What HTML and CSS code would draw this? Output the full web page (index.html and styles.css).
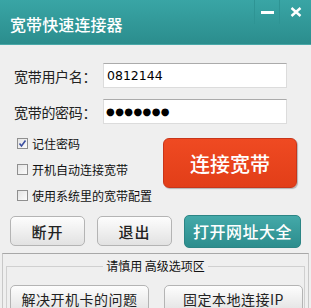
FILE: index.html
```html
<!DOCTYPE html>
<html lang="zh">
<head>
<meta charset="utf-8">
<link rel="stylesheet" href="styles.css">
</head>
<body>
<div class="window">
  <div class="titlebar">
    <div class="title">宽带快速连接器</div>
    <div class="controls">
      <div class="ctl ctl-min"><span class="dash"></span></div>
      <div class="ctl ctl-close">
        <svg width="12" height="10" viewBox="0 0 12 10"><path d="M1.5 1 L10.5 9 M10.5 1 L1.5 9" stroke="#fff" stroke-width="2.4" stroke-linecap="butt"/></svg>
      </div>
    </div>
  </div>

  <div class="form">
    <div class="field">
      <label class="lbl">宽带用户名：</label>
      <div class="input">0812144</div>
    </div>
    <div class="field">
      <label class="lbl">宽带的密码：</label>
      <div class="input pwd">●●●●●●●</div>
    </div>
  </div>

  <div class="middle">
    <div class="checks">
      <div class="check"><span class="box checked"><svg width="9" height="9" viewBox="0 0 9 9"><path d="M1.5 4.5 L3.5 7 L7.5 1.5" fill="none" stroke="#3b4fa0" stroke-width="1.6"/></svg></span>记住密码</div>
      <div class="check"><span class="box"></span>开机自动连接宽带</div>
      <div class="check"><span class="box"></span>使用系统里的宽带配置</div>
    </div>
    <div class="connect">连接宽带</div>
  </div>

  <div class="actions">
    <div class="btn gray">断开</div>
    <div class="btn gray">退出</div>
    <div class="btn teal">打开网址大全</div>
  </div>

  <div class="advanced">
    <div class="group">
      <div class="legend">请慎用 高级选项区</div>
      <div class="group-btns">
        <div class="btn gray wide">解决开机卡的问题</div>
        <div class="btn gray wide">固定本地连接IP</div>
      </div>
    </div>
  </div>
</div>
</body>
</html>
```

FILE: styles.css
```css
* { box-sizing: border-box; margin: 0; padding: 0; }
html, body { width: 311px; height: 308px; overflow: hidden; }
body {
  font-family: "Noto Sans CJK SC", "Liberation Sans", sans-serif;
  background: #efefef;
  color: #111;
}
.window {
  width: 311px;
  height: 308px;
  background: #efefef;
  overflow: hidden;
  display: flex;
  flex-direction: column;
}
.titlebar {
  height: 45px;
  flex: none;
  background: linear-gradient(#39a5a5, #2b8d8d);
  border-bottom: 1px solid #4aa8a8;
  display: flex;
  justify-content: space-between;
  align-items: flex-start;
}
.title {
  color: #fff;
  font-size: 16px;
  font-weight: 500;
  line-height: 1;
  padding: 16px 0 0 10px;
  letter-spacing: 0.1px;
}
.controls {
  display: flex;
  height: 24px;
}
.ctl {
  width: 26px;
  height: 24px;
  display: flex;
  align-items: center;
  justify-content: center;
}
.ctl-min { border-left: 1px solid #2e9494; border-right: 1px solid #2e9494; }
.ctl-close { width: 31px; }
.dash { width: 13px; height: 3px; background: #fff; display: block; }

.form {
  padding: 18px 0 0 14px;
  display: flex;
  flex-direction: column;
  gap: 11px;
}
.field { display: flex; align-items: center; height: 25px; }
.lbl {
  width: 89px;
  font-size: 14px;
  color: #222;
  letter-spacing: -0.3px;
}
.input {
  width: 184px;
  height: 25px;
  background: #fff;
  border: 1px solid #dcdcdc;
  border-top-color: #ababab;
  font-family: "DejaVu Sans", "Liberation Sans", sans-serif;
  font-size: 12.5px;
  line-height: 23px;
  padding-left: 3px;
  color: #000;
}
.pwd { font-size: 10px; letter-spacing: 0.4px; padding-left: 2px; }

.middle {
  display: flex;
  padding-top: 6px;
  height: 84px;
  flex: none;
}
.checks {
  display: flex;
  flex-direction: column;
  padding-left: 17px;
  width: 163px;
}
.check {
  height: 26px;
  display: flex;
  align-items: center;
  font-size: 12px;
  color: #111;
  gap: 4px;
  white-space: nowrap;
}
.box {
  width: 11px;
  height: 11px;
  border: 1px solid #8f8f8f;
  background: linear-gradient(135deg, #e4e4e4, #fbfbfb);
  display: flex;
  align-items: center;
  justify-content: center;
  flex: none;
}
.connect {
  margin-top: 8px;
  width: 134px;
  height: 50px;
  border-radius: 6px;
  background: linear-gradient(#ef4a22, #e23e18);
  border: 1px solid #c8351a;
  box-shadow: 1px 1px 1px rgba(0,0,0,0.25);
  color: #fff;
  font-size: 20px;
  font-weight: 500;
  display: flex;
  align-items: center;
  justify-content: center;
  letter-spacing: 0;
}

.actions {
  display: flex;
  align-items: center;
  padding: 0 0 0 10px;
  gap: 12px;
  height: 44px;
  flex: none;
  margin-top: 1px;
}
.btn {
  display: flex;
  align-items: center;
  justify-content: center;
  border-radius: 5px;
  flex: none;
}
.gray {
  width: 75px;
  height: 30px;
  border: 1px solid #b4b4b4;
  background: linear-gradient(#fdfdfd, #e2e2e2);
  color: #222;
  font-size: 15px;
  font-weight: 500;
  letter-spacing: 1px;
}
.teal {
  width: 117px;
  height: 33px;
  background: linear-gradient(#44a9a9, #2c8d8d);
  border: 1px solid #2c8585;
  color: #fff;
  font-size: 16px;
  font-weight: 500;
  letter-spacing: 0.5px;
}

.advanced {
  flex: 1;
  margin: 0 2px;
  border-top: 1px solid #a8a8a8;
  border-left: 1px solid #c8c8c8;
  border-right: 1px solid #c8c8c8;
  padding: 4px 3px 0 3px;
}
.group {
  position: relative;
  border: 1px solid #d0d0d0;
  border-bottom: none;
  margin-top: 8px;
  height: 60px;
}
.legend {
  position: absolute;
  top: -10px;
  left: 0;
  right: 0;
  margin: 0 auto;
  width: max-content;
  background: #efefef;
  padding: 0 3px;
  font-size: 12px;
  line-height: 18px;
  color: #111;
}
.group-btns {
  display: flex;
  gap: 15px;
  padding: 18px 0 0 3px;
}
.wide {
  width: 139px;
  height: 28px;
  font-size: 14px;
  font-weight: 400;
  letter-spacing: 0.5px;
}
```
